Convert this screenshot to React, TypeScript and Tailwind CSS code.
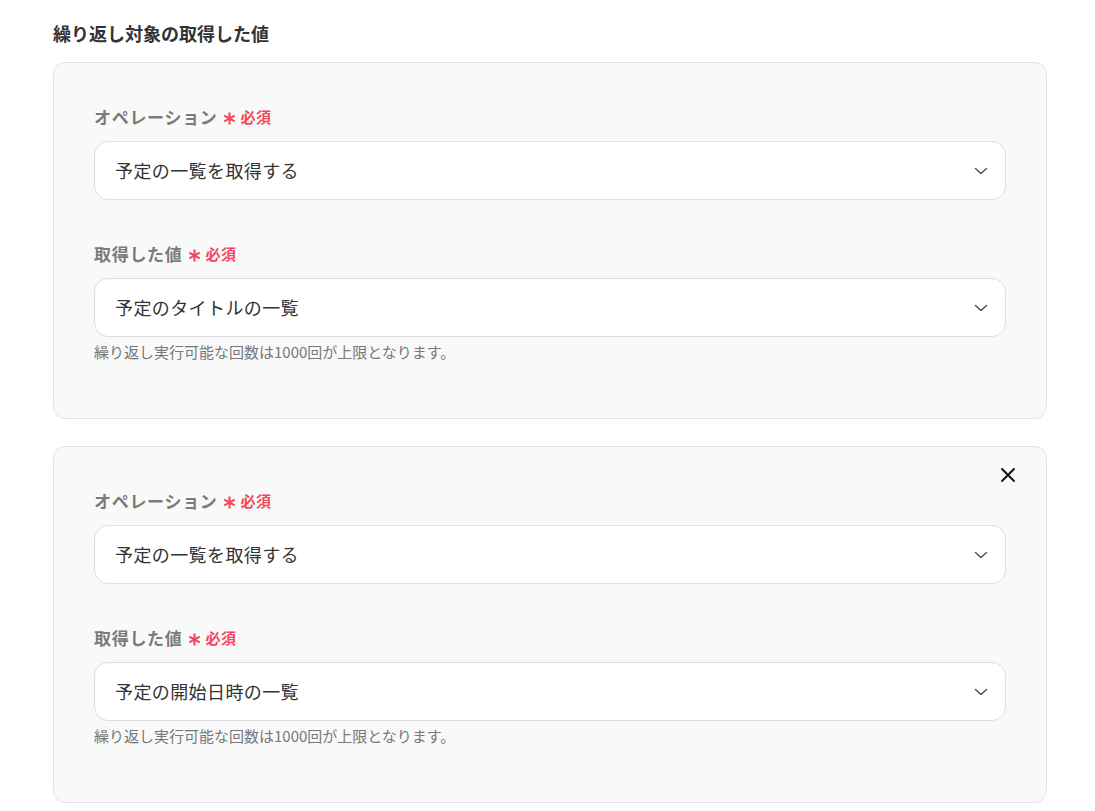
import React from 'react';

interface FieldProps {
    label: string;
    value: string;
    hint?: string;
}

const Chevron = () => (
    <svg width="16" height="16" viewBox="0 0 16 16" fill="none" className="text-[#555]">
        <path d="M2.5 5.5L8 10.5L13.5 5.5" stroke="currentColor" strokeWidth="1.6" strokeLinecap="round" strokeLinejoin="round" />
    </svg>
);

const Asterisk = () => (
    <svg width="13" height="13" viewBox="0 0 12 12" fill="none" className="text-[#f5475b] ml-[5px] mt-[3px]">
        <path d="M6 0.5V11.5M1.2 3.25L10.8 8.75M10.8 3.25L1.2 8.75" stroke="currentColor" strokeWidth="1.9" />
    </svg>
);

const Field: React.FC<FieldProps> = ({ label, value, hint }) => (
    <div className="flex flex-col">
        <div className="flex items-center h-6 mb-3">
            <span className="text-[17px] font-bold text-[#7b7b7b] tracking-[0.7px]">{label}</span>
            <Asterisk />
            <span className="text-[15px] font-bold text-[#f5475b] ml-[5px] tracking-[0.5px]">必須</span>
        </div>
        <div className="h-[59px] bg-white border border-[#dedede] rounded-[14px] flex items-center justify-between pl-5 pr-4">
            <span className="text-[18px] text-[#333] tracking-[0.4px]">{value}</span>
            <Chevron />
        </div>
        {hint && <p className="text-[15px] text-[#777] mt-[5px] leading-5">{hint}</p>}
    </div>
);

interface CardProps {
    fields: FieldProps[];
    closable?: boolean;
}

const Card: React.FC<CardProps> = ({ fields, closable }) => (
    <div className="relative bg-[#f9f9f9] border border-[#e3e3e3] rounded-xl pl-10 pr-10 pt-[42px] pb-[56px] flex flex-col gap-[42px]">
        {closable && (
            <button className="absolute top-[19px] right-[29px] text-[#111]">
                <svg width="18" height="18" viewBox="0 0 18 18" fill="none">
                    <path d="M3 3L15 15M15 3L3 15" stroke="currentColor" strokeWidth="2" strokeLinecap="round" />
                </svg>
            </button>
        )}
        {fields.map((f, i) => (
            <Field key={i} {...f} />
        ))}
    </div>
);

const HINT = '繰り返し実行可能な回数は1000回が上限となります。';

export default function App() {
    return (
        <div
            className="min-h-screen bg-white px-[53px] pt-[20px] pb-2"
            style={{ fontFamily: '"Noto Sans CJK JP", "Noto Sans", sans-serif' }}
        >
            <h2 className="text-[18px] font-bold text-[#333] leading-[26px] mb-[16px]">繰り返し対象の取得した値</h2>
            <div className="w-[994px] flex flex-col gap-[27px]">
                <Card
                    fields={[
                        { label: 'オペレーション', value: '予定の一覧を取得する' },
                        { label: '取得した値', value: '予定のタイトルの一覧', hint: HINT },
                    ]}
                />
                <Card
                    closable
                    fields={[
                        { label: 'オペレーション', value: '予定の一覧を取得する' },
                        { label: '取得した値', value: '予定の開始日時の一覧', hint: HINT },
                    ]}
                />
            </div>
        </div>
    );
}
